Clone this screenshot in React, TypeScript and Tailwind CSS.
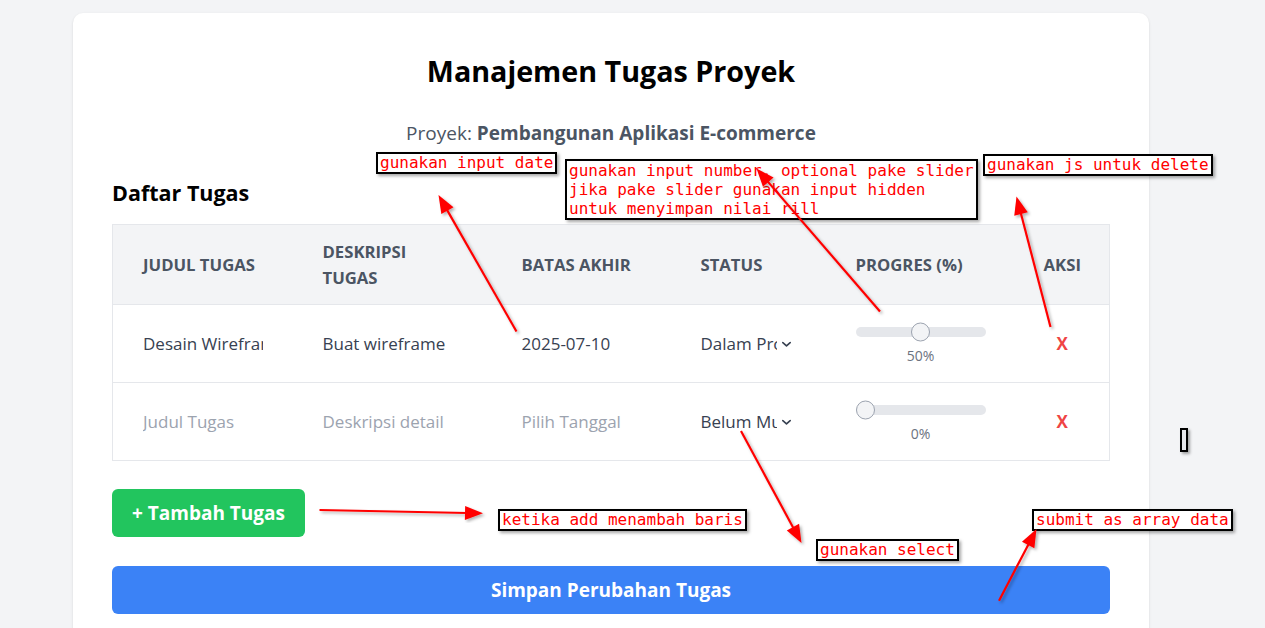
import { useState } from "react";

type Task = {
  id: number;
  title: string;
  description: string;
  deadline: string;
  status: string;
  progress: number;
};

const STATUS_OPTIONS = ["Belum Mulai", "Dalam Proses", "Selesai"];

// Red review arrows drawn over the page
function Arrow({ x1, y1, x2, y2 }: { x1: number; y1: number; x2: number; y2: number }) {
  const dx = x2 - x1;
  const dy = y2 - y1;
  const len = Math.hypot(dx, dy);
  const ux = dx / len;
  const uy = dy / len;
  const headLen = 18;
  const headHalf = 7;
  const bx = x2 - ux * headLen;
  const by = y2 - uy * headLen;
  const px = -uy;
  const py = ux;
  const points = `${x2},${y2} ${bx + px * headHalf},${by + py * headHalf} ${bx - px * headHalf},${by - py * headHalf}`;
  return (
    <g filter="url(#arrow-shadow)">
      <line x1={x1} y1={y1} x2={bx + ux * 2} y2={by + uy * 2} stroke="#ff0000" strokeWidth="2.2" />
      <polygon points={points} fill="#ff0000" />
    </g>
  );
}

function Note({ className, children }: { className: string; children: React.ReactNode }) {
  return (
    <div
      className={`absolute border-2 border-black bg-white px-[2px] font-['DejaVu_Sans_Mono',monospace] text-[16px] leading-[18px] text-[#ff0000] shadow-[2px_2px_3px_rgba(0,0,0,0.35)] whitespace-pre ${className}`}
    >
      {children}
    </div>
  );
}

function Slider({ value }: { value: number }) {
  return (
    <div className="w-[130px]">
      <div className="flex h-5 items-center">
        <div className="relative h-[10px] w-full rounded-full bg-[#e5e7eb]">
          <div
            className="absolute top-1/2 h-[19px] w-[19px] -translate-y-1/2 rounded-full border border-[#9ca3af] bg-[#f3f4f6]"
            style={{ left: `${(value / 100) * 111}px` }}
          />
        </div>
      </div>
      <div className="mt-1 text-center text-sm text-[#6b7280]">{value}%</div>
    </div>
  );
}

export default function App() {
  const [tasks, setTasks] = useState<Task[]>([
    {
      id: 1,
      title: "Desain Wireframe",
      description: "Buat wireframe",
      deadline: "2025-07-10",
      status: "Dalam Proses",
      progress: 50,
    },
    { id: 2, title: "", description: "", deadline: "", status: "Belum Mulai", progress: 0 },
  ]);

  const update = (id: number, field: keyof Task, value: string | number) =>
    setTasks((prev) => prev.map((t) => (t.id === id ? { ...t, [field]: value } : t)));

  const addTask = () =>
    setTasks((prev) => [
      ...prev,
      { id: Date.now(), title: "", description: "", deadline: "", status: "Belum Mulai", progress: 0 },
    ]);

  const removeTask = (id: number) => setTasks((prev) => prev.filter((t) => t.id !== id));

  return (
    <div className="relative min-h-screen bg-[#f3f4f6] pl-[73px] pt-[13px] font-['Open_Sans',sans-serif]">
      {/* Card */}
      <div className="w-[1076px] rounded-[10px] bg-white px-[39px] pb-10 pt-10 shadow-sm">
        <h1 className="mb-[30px] text-center text-[28.7px] font-bold leading-9 text-black">Manajemen Tugas Proyek</h1>
        <p className="mb-[32px] text-center text-[19px] leading-7 text-[#4b5563]">
          Proyek: <span className="font-bold">Pembangunan Aplikasi E-commerce</span>
        </p>

        <h2 className="mb-[17px] text-[21.5px] font-bold leading-7 text-black">Daftar Tugas</h2>

        <table className="w-full table-fixed border-collapse border border-[#e5e7eb]">
          <colgroup>
            <col className="w-[180px]" />
            <col className="w-[199px]" />
            <col className="w-[179px]" />
            <col className="w-[155px]" />
            <col className="w-[190px]" />
            <col />
          </colgroup>
          <thead className="bg-[#f3f4f6]">
            <tr className="text-left text-[16.7px] font-bold uppercase leading-[26px] text-[#4b5563]">
              <th className="px-[30px] py-[13.5px]">Judul Tugas</th>
              <th className="px-[30px] py-[13.5px]">Deskripsi Tugas</th>
              <th className="px-[30px] py-[13.5px]">Batas Akhir</th>
              <th className="px-[30px] py-[13.5px]">Status</th>
              <th className="px-[30px] py-[13.5px]">Progres (%)</th>
              <th className="py-[13.5px] text-center">Aksi</th>
            </tr>
          </thead>
          <tbody>
            {tasks.map((task) => (
              <tr key={task.id} className="border-t border-[#e5e7eb] text-[17px] text-[#374151]">
                <td className="px-[30px] py-[16.5px]">
                  <input
                    value={task.title}
                    onChange={(e) => update(task.id, "title", e.target.value)}
                    placeholder="Judul Tugas"
                    className="w-full bg-transparent outline-none placeholder:text-[#9ca3af]"
                  />
                </td>
                <td className="px-[30px] py-[16.5px]">
                  <input
                    value={task.description}
                    onChange={(e) => update(task.id, "description", e.target.value)}
                    placeholder="Deskripsi detail"
                    className="w-full bg-transparent outline-none placeholder:text-[#9ca3af]"
                  />
                </td>
                <td className="px-[30px] py-[16.5px]">
                  <input
                    value={task.deadline}
                    onChange={(e) => update(task.id, "deadline", e.target.value)}
                    placeholder="Pilih Tanggal"
                    className="w-full bg-transparent outline-none placeholder:text-[#9ca3af]"
                  />
                </td>
                <td className="px-[30px] py-[16.5px]">
                  <div className="relative">
                    <select
                      value={task.status}
                      onChange={(e) => update(task.id, "status", e.target.value)}
                      className="w-full appearance-none bg-transparent pr-[19px] outline-none"
                    >
                      {STATUS_OPTIONS.map((s) => (
                        <option key={s}>{s}</option>
                      ))}
                    </select>
                    <svg
                      className="pointer-events-none absolute right-[4px] top-1/2 h-[11px] w-[11px] -translate-y-1/2 text-[#374151]"
                      viewBox="0 0 12 12"
                      fill="none"
                      stroke="currentColor"
                      strokeWidth="1.8"
                      strokeLinecap="round"
                      strokeLinejoin="round"
                    >
                      <path d="M2 4.5l4 3.5 4-3.5" />
                    </svg>
                  </div>
                </td>
                <td className="px-[30px] py-[16.5px]">
                  <Slider value={task.progress} />
                  <input type="hidden" value={task.progress} readOnly />
                </td>
                <td className="py-[16.5px] text-center">
                  <button onClick={() => removeTask(task.id)} className="font-bold text-[#ef4444]">
                    X
                  </button>
                </td>
              </tr>
            ))}
          </tbody>
        </table>

        <button
          onClick={addTask}
          className="mt-[28px] rounded-md bg-[#22c55e] px-5 py-[10px] text-[19px] font-bold leading-7 text-white"
        >
          + Tambah Tugas
        </button>

        <button className="mt-[29px] block w-full rounded-md bg-[#3b82f6] py-[10px] text-[19px] font-bold leading-7 text-white">
          Simpan Perubahan Tugas
        </button>
      </div>

      {/* Review annotations */}
      <Note className="left-[376px] top-[152px]">gunakan input date</Note>
      <Note className="left-[565px] top-[159px] leading-[19px]">
        {"gunakan input number, optional pake slider\njika pake slider gunakan input hidden\nuntuk menyimpan nilai rill"}
      </Note>
      <Note className="left-[983px] top-[154px]">gunakan js untuk delete</Note>
      <Note className="left-[498px] top-[509px]">ketika add menambah baris</Note>
      <Note className="left-[816px] top-[539px]">gunakan select</Note>
      <Note className="left-[1032px] top-[509px]">submit as array data</Note>
      <div className="absolute left-[1180px] top-[428px] h-[24px] w-[8px] border-2 border-black bg-[#e5e7eb] shadow-[2px_2px_3px_rgba(0,0,0,0.35)]" />

      <svg className="pointer-events-none absolute left-0 top-0" width="1265" height="628">
        <defs>
          <filter id="arrow-shadow" x="-20%" y="-20%" width="140%" height="140%">
            <feDropShadow dx="2" dy="2" stdDeviation="1.5" floodColor="#000" floodOpacity="0.3" />
          </filter>
        </defs>
        <Arrow x1={516.5} y1={331.5} x2={438.5} y2={195} />
        <Arrow x1={880} y1={311.5} x2={756.5} y2={168.5} />
        <Arrow x1={1050.5} y1={327} x2={1016.5} y2={196.5} />
        <Arrow x1={319.5} y1={510} x2={483} y2={513.3} />
        <Arrow x1={741} y1={431} x2={801.5} y2={543} />
        <Arrow x1={999} y1={600.7} x2={1036.5} y2={529} />
      </svg>
    </div>
  );
}
